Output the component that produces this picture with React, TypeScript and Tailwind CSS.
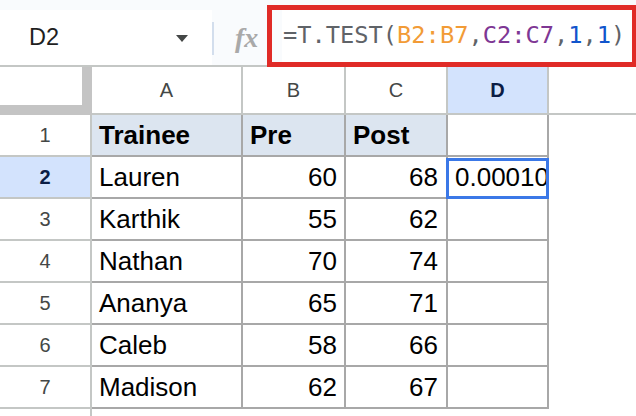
const columns = [
  { key: "A", width: "w-[151px]" },
  { key: "B", width: "w-[103px]" },
  { key: "C", width: "w-[102px]" },
  { key: "D", width: "w-[101px]" },
]

const rows = [
  ["Lauren", "60", "68"],
  ["Karthik", "55", "62"],
  ["Nathan", "70", "74"],
  ["Ananya", "65", "71"],
  ["Caleb", "58", "66"],
  ["Madison", "62", "67"],
]

const sans = "font-['Liberation_Sans',Arial,sans-serif]"

function FormulaBar() {
  return (
    <div className="flex h-[67px] w-full bg-[#f9fbfd]">
      <div className="flex h-[67px] border-b-2 border-[#c4c7c5] pt-[10px]">
        <div className={`flex h-[55px] w-[212px] items-center bg-white pl-[29px] pr-[24px] ${sans}`}>
          <span className="text-[23.5px] text-[#1f1f1f]">D2</span>
          <svg className="ml-auto mt-[1px]" width="12" height="7" viewBox="0 0 12 7">
            <polygon points="0,0 12,0 6,7" fill="#444746" />
          </svg>
        </div>
        <div className="mt-[12px] h-[33px] w-[2px] bg-[#d3deed]" />
        <div className="flex h-[55px] w-[53px] items-center pl-[21px]">
          <span className="font-['Liberation_Serif',serif] text-[28px] font-bold italic leading-none text-[#a9a9a9]">
            fx
          </span>
        </div>
      </div>
      <div className="mt-[5px] flex h-[62px] flex-1 border-[5px] border-r-[4px] border-[#e02b27] bg-[#f9fbfd] pl-[10px]">
        <div className="flex flex-1 items-center bg-white pl-[1px] font-['DejaVu_Sans_Mono',monospace] text-[23.7px] text-[#5f6368]">
          <span>=T.TEST(</span>
          <span className="text-[#f29b36]">B2:B7</span>
          <span>,</span>
          <span className="text-[#7e3794]">C2:C7</span>
          <span>,</span>
          <span className="text-[#1155cc]">1</span>
          <span>,</span>
          <span className="text-[#1155cc]">1</span>
          <span>)</span>
        </div>
      </div>
    </div>
  )
}

export default function App() {
  return (
    <div className={`h-[416px] w-[636px] overflow-hidden bg-white ${sans}`}>
      <FormulaBar />

      <div className="flex h-[48px]">
        <div className="h-[48px] w-[92px] border-b-[10px] border-r-[10px] border-[#c4c4c4] bg-white" />
        {columns.map((col) => (
          <div
            key={col.key}
            className={`flex h-[48px] ${col.width} items-center justify-center border-b-2 border-r-2 border-[#c4c7c5] text-[20px] ${
              col.key === "D" ? "bg-[#d3e3fd] font-bold text-[#0b1d45]" : "text-[#444746]"
            }`}
          >
            {col.key}
          </div>
        ))}
        <div className="h-[48px] flex-1 border-b-2 border-[#c4c7c5]" />
      </div>

      <div className="flex h-[42px]">
        <div className="flex h-[42px] w-[92px] items-center justify-center border-b-2 border-r-2 border-[#c4c7c5] text-[20px] text-[#444746]">
          1
        </div>
        <div className="h-[42px] w-[151px] border-b-2 border-r-2 border-[#a8a8a8] bg-[#dce5f0] pl-[7px] text-[26px] font-bold leading-[40px] text-black">
          Trainee
        </div>
        <div className="h-[42px] w-[103px] border-b-2 border-r-2 border-[#a8a8a8] bg-[#dce5f0] pl-[7px] text-[26px] font-bold leading-[40px] text-black">
          Pre
        </div>
        <div className="h-[42px] w-[102px] border-b-2 border-r-2 border-[#a8a8a8] bg-[#dce5f0] pl-[7px] text-[26px] font-bold leading-[40px] text-black">
          Post
        </div>
        <div className="h-[42px] w-[101px] border-b-2 border-r-2 border-[#a8a8a8]" />
      </div>

      {rows.map((row, i) => {
        const selected = i === 0
        return (
          <div key={row[0]} className="flex h-[42px]">
            <div
              className={`flex h-[42px] w-[92px] items-center justify-center border-b-2 border-r-2 border-[#c4c7c5] text-[20px] ${
                selected ? "bg-[#d3e3fd] font-bold text-[#0b1d45]" : "text-[#444746]"
              }`}
            >
              {i + 2}
            </div>
            <div className="h-[42px] w-[151px] border-b-2 border-r-2 border-[#a8a8a8] pl-[7px] text-[26px] leading-[40px] text-black">
              {row[0]}
            </div>
            <div className="h-[42px] w-[103px] border-b-2 border-r-2 border-[#a8a8a8] pr-[7px] text-right text-[26px] leading-[40px] text-black">
              {row[1]}
            </div>
            <div className="h-[42px] w-[102px] border-b-2 border-r-2 border-[#a8a8a8] pr-[8px] text-right text-[26px] leading-[40px] text-black">
              {row[2]}
            </div>
            <div className="relative h-[42px] w-[101px] border-b-2 border-r-2 border-[#a8a8a8]">
              {selected && (
                <>
                  <div className="h-[40px] overflow-hidden whitespace-nowrap pl-[7px] text-[26px] leading-[40px] text-black">
                    0.00010
                  </div>
                  <div className="pointer-events-none absolute -bottom-[2px] -left-[2px] -right-[2px] top-[1px] border-[3px] border-[#3b78e7]" />
                </>
              )}
            </div>
          </div>
        )
      })}

      <div className="flex h-[20px]">
        <div className="h-[20px] w-[92px] border-r-2 border-[#c4c7c5]" />
      </div>
    </div>
  )
}
